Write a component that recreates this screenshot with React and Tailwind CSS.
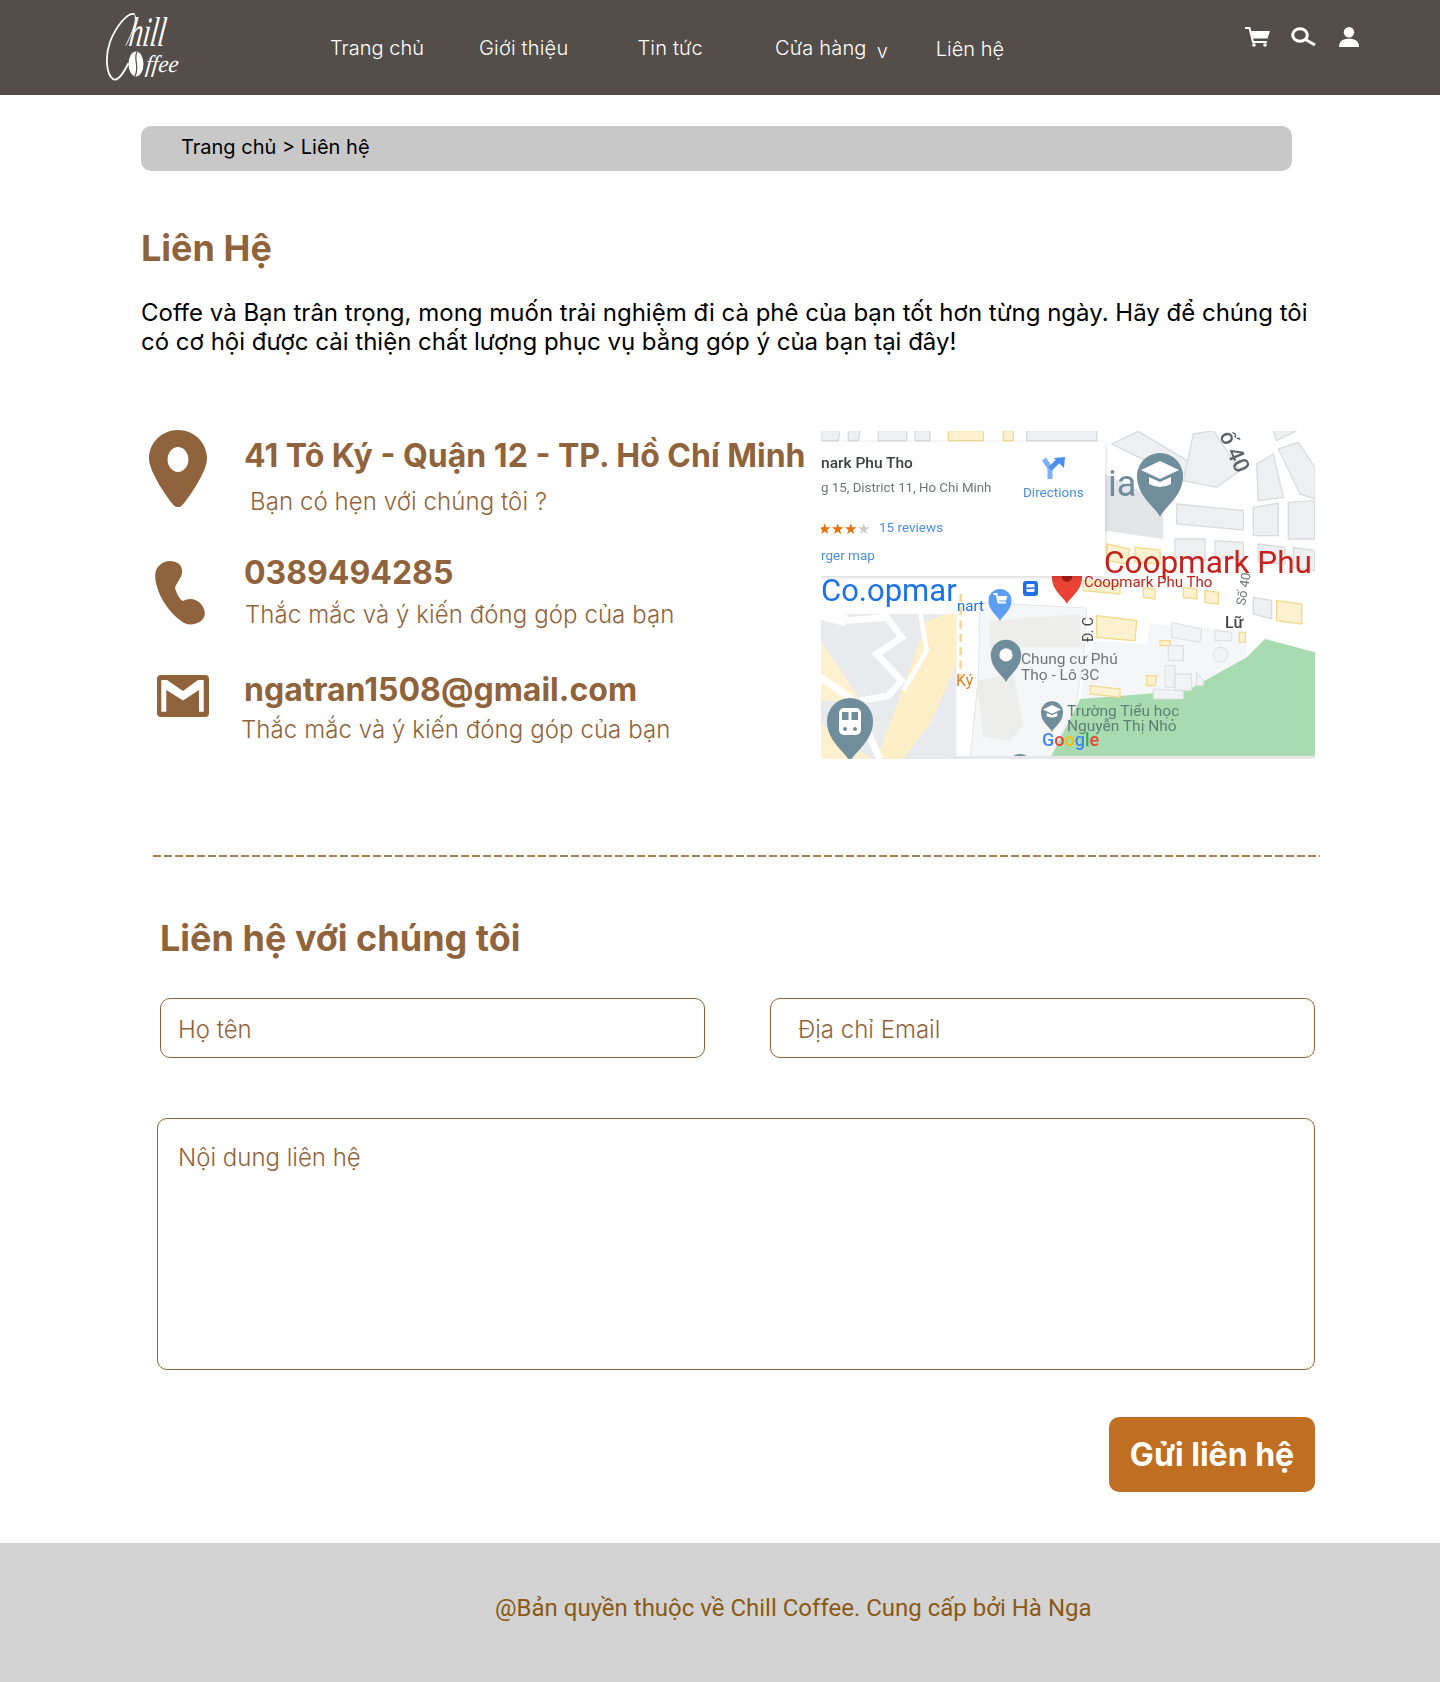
import React from "react";

const Logo = () => (
  <svg width="84" height="70" viewBox="0 0 84 70" className="ml-[104px] mt-[12px] shrink-0">
    {/* C swash */}
    <path d="M30 2 C24 0 12 14 6 30 C1 44 2 62 9 67 C14 70 20 60 24 52" fill="none" stroke="#fff" strokeWidth="1.800" strokeLinecap="round" />
    <path d="M30 2 C34 4 30 18 22 33" fill="none" stroke="#fff" strokeWidth="1" strokeLinecap="round" />
    <text transform="translate(24 34) skewX(-8)" fill="#fff" fontFamily="Liberation Serif" fontStyle="italic" fontSize="42" textLength="36" lengthAdjust="spacingAndGlyphs">hill</text>
    {/* bean */}
    <ellipse cx="32" cy="52" rx="7.500" ry="12.500" fill="#fff" />
    <path d="M33 40 C29 47 36 55 31 64" fill="none" stroke="#534e4a" strokeWidth="1.200" />
    <text transform="translate(41 60) skewX(-6)" fill="#fff" fontFamily="Liberation Serif" fontStyle="italic" fontSize="24" textLength="33" lengthAdjust="spacingAndGlyphs">ffee</text>
  </svg>
);

const CartIcon = () => (
  <svg width="25" height="20" viewBox="0 0 25 20">
    <path d="M0 1 H4.500 L8 15 H22" fill="none" stroke="#fff" strokeWidth="2" />
    <path d="M6 4 H25 L22.500 11.500 H8Z" fill="#fff" />
    <circle cx="9" cy="18" r="1.800" fill="#fff" />
    <circle cx="20" cy="18" r="1.800" fill="#fff" />
  </svg>
);

const SearchIcon = () => (
  <svg width="25" height="19" viewBox="0 0 25 19">
    <ellipse cx="9" cy="8" rx="7.300" ry="6.300" fill="none" stroke="#fff" strokeWidth="3" />
    <path d="M14.500 12.500 L24 18" fill="none" stroke="#fff" strokeWidth="3" />
  </svg>
);

const UserIcon = () => (
  <svg width="20" height="20" viewBox="0 0 20 20">
    <circle cx="10" cy="5.200" r="5.200" fill="#fff" />
    <path d="M0 20 C0 14 4 11.800 10 11.800 C16 11.800 20 14 20 20Z" fill="#fff" />
  </svg>
);

const PinIcon = () => (
  <svg width="58" height="77" viewBox="0 0 58 77">
    <path fillRule="evenodd" d="M29 0C13 0 0 12.500 0 28.500 C0 42 19 69 25 75.500 C27 77.500 31 77.500 33 75.500 C39 69 58 42 58 28.500 C58 12.500 45 0 29 0Z M29 17 a10 12 0 1 1 0 25 a10 12 0 1 1 0 -25Z" fill="#8f643c" />
  </svg>
);

const PhoneIcon = () => (
  <svg width="52" height="66" viewBox="0 0 52 66">
    <path d="M15 0 C23 0 28 5 27 12 C26 18 21 22 20 27 C22 33 24 38 28 40 C33 37 41 37 46 43 C51 49 51 56 46 60 C40 64 32 65 26 60 C15 52 5 38 1.500 24 C-1 14 0 8 5 4 C8 1 11 0 15 0Z" fill="#8f643c" />
  </svg>
);

const MailIcon = () => (
  <svg width="52" height="42" viewBox="0 0 52 42">
    <rect x="0" y="0" width="52" height="42" rx="4" fill="#8f643c" />
    <polygon points="4.300,5 10,5 26,16 41,5 46.700,5 46.700,36.700 42,36.700 42,15 26,25.500 9.300,15 9.300,36.700 4.300,36.700" fill="#fff" />
  </svg>
);

const Marker = ({ x, y, s = 1, color = "#6f8d9b", children }) => (
  <g transform={`translate(${x} ${y}) scale(${s})`}>
    <path d="M0 0 C-4 -10 -23 -20 -23 -41 A23 23 0 1 1 23 -41 C23 -20 4 -10 0 0Z" fill={color} />
    {children}
  </g>
);

const Cap = () => (
  <>
    <path d="M0 -56 L19 -47 L0 -38 L-19 -47Z" fill="#fff" />
    <path d="M-11 -40 L-11 -33 Q0 -27 11 -33 L11 -40 L0 -35Z" fill="#fff" />
  </>
);

// polygons in crop coordinates (3x), see the group transform below
const grayBlocks = [
  "33,20 90,20 85,50 33,50",
  "115,20 150,20 145,50 115,50",
  "205,20 290,20 290,50 205,50",
  "315,20 360,20 360,50 315,50",
  "650,20 860,20 860,50 650,50",
  "905,60 985,22 1165,130 1100,155",
  "1100,240 1300,260 1300,318 1100,300",
  "1330,250 1405,238 1405,335 1330,335",
  "1435,235 1515,230 1515,345 1435,345",
  "1405,75 1465,55 1515,130 1515,225 1470,210",
  "1340,120 1390,90 1420,220 1345,230",
  "1150,30 1210,20 1290,140 1220,190 1120,170",
  "1390,20 1460,20 1400,50",
  "1095,345 1185,345 1185,410 1095,400",
  "1215,350 1300,355 1300,410 1215,400",
  "1345,360 1425,370 1425,420 1345,415",
  "1450,370 1515,380 1515,440 1450,430",
  "1330,520 1385,530 1385,585 1330,570",
];

const yellowBlocks = [
  "415,20 520,20 520,50 415,50",
  "580,20 610,20 610,50 580,50",
  "890,360 960,375 950,420 890,410",
  "975,370 1050,378 1050,420 975,415",
  "860,575 980,590 975,650 860,640",
  "1400,530 1475,540 1475,600 1400,590",
  "820,470 930,480 930,510 820,500",
  "1000,490 1035,495 1035,525 1000,520",
  "1120,490 1160,495 1160,525 1120,520",
  "1185,500 1225,505 1225,540 1185,535",
  "1010,755 1040,755 1035,785 1010,785",
  "840,785 930,795 930,820 840,810",
  "1050,650 1080,650 1080,665 1050,665",
  "1288,625 1306,625 1306,655 1288,655",
];

const outlineBlocks = [
  "1085,595 1175,615 1170,655 1085,640",
  "1215,620 1265,625 1265,650 1215,650",
  "1075,665 1120,665 1120,710 1075,710",
  "1065,725 1095,725 1095,790 1065,790",
  "1095,750 1145,750 1145,800 1095,800",
  "1160,745 1180,770 1180,785 1160,785",
  "1030,795 1120,800 1120,825 1030,825",
];

// Blurry map capture in the contact block
const MapPicture = () => (
  <svg width="494" height="328" viewBox="0 0 494 328" className="shrink-0 ml-[16px] block">
    <defs>
      <filter id="soft"><feGaussianBlur stdDeviation="0.5" /></filter>
      <filter id="cardShadow" x="-5%" y="-5%" width="110%" height="115%"><feDropShadow dx="0" dy="1" stdDeviation="2" floodColor="#000" floodOpacity="0.18" /></filter>
    </defs>
    <rect width="494" height="328" fill="#ffffff" />
    <g filter="url(#soft)">
      <g transform="translate(-11 -7) scale(0.33333)">
        <polygon points="885,150 1060,235 1060,345 885,320" fill="#e3e5e8" />
        {grayBlocks.map((p) => <polygon key={p} points={p} fill="#eff0f2" stroke="#d9dcdf" strokeWidth="4" />)}

        {/* lower left */}
        <polygon points="33,560 440,560 440,1005 33,1005" fill="#e8eaed" />
        <polygon points="33,650 120,780 150,830 33,830" fill="#fdf1cf" />
        <polygon points="33,900 110,960 190,1005 33,1005" fill="#fdf1cf" />
        <polygon points="350,590 440,560 440,720 360,900 280,1005 200,1005 280,790" fill="#fdf0c9" />
        <path d="M33 760 L130 830 L210 1005" fill="none" stroke="#fff" strokeWidth="22" />
        <path d="M110 590 L230 580 L275 640 L200 690 L275 770 L235 815 L150 830" fill="none" stroke="#fff" strokeWidth="20" />
        <path d="M33 570 L110 590" fill="none" stroke="#fff" strokeWidth="34" />
        <path d="M330 560 L350 680 L280 800" fill="none" stroke="#fff" strokeWidth="14" />

        {/* road over lower blocks */}
        <polygon points="33,455 885,455 885,530 440,570 33,570" fill="#ffffff" />
      </g>
      {/* Co.opmar sits behind the white column */}
      <text x="0" y="170" fontFamily="Roboto" fontSize="31" fill="#1a73e8">Co.opmar</text>
      <g transform="translate(-11 -7) scale(0.33333)">
        <rect x="440" y="455" width="65" height="550" fill="#fff" />
        <path d="M452 510 V780" stroke="#f7d98c" strokeWidth="8" strokeDasharray="24 16" />

        {/* hospital compound */}
        <polygon points="510,535 830,552 822,690 800,830 720,1005 480,1005 505,760" fill="#f5f6f8" stroke="#e3e5e8" strokeWidth="3" />
        <polygon points="540,590 810,570 815,670 640,670 540,700" fill="#ededec" />
        <polygon points="500,770 610,750 640,900 600,950 520,940" fill="#ededec" />
        <polygon points="1020,600 1310,620 1310,700 1130,800 810,830 830,700 850,650 1010,660" fill="#f5f6f8" />

        {/* park */}
        <polygon points="1365,645 1515,685 1515,1005 720,1005 810,825 1130,800 1310,700" fill="#a8dbb0" />

        {yellowBlocks.map((p) => <polygon key={p} points={p} fill="#fdf2d0" stroke="#f5d98f" strokeWidth="4" />)}
        {outlineBlocks.map((p) => <polygon key={p} points={p} fill="#f2f3f4" stroke="#dadcdf" strokeWidth="3" />)}
        <circle cx="1232" cy="692" r="22" fill="#f2f3f4" stroke="#dadcdf" strokeWidth="3" />
      </g>

      {/* markers */}
      <Marker x="339" y="86">
        <Cap />
      </Marker>
      <Marker x="29" y="331">
        <rect x="-11" y="-54" width="22" height="27" rx="5" fill="#fff" />
        <rect x="-8" y="-50" width="6.500" height="8" fill="#6f8d9b" />
        <rect x="1.500" y="-50" width="6.500" height="8" fill="#6f8d9b" />
        <circle cx="-5" cy="-33" r="2" fill="#6f8d9b" />
        <circle cx="5" cy="-33" r="2" fill="#6f8d9b" />
      </Marker>
      <Marker x="179" y="190" s="0.5" color="#5b9df5">
        <path d="M-13 -54 L-7 -54 L-3 -37 L12 -37" fill="none" stroke="#fff" strokeWidth="4" />
        <path d="M-6 -50 H15 L12 -41 H-4Z" fill="#fff" />
      </Marker>
      <Marker x="185" y="251" s="0.66">
        <circle cx="0" cy="-41" r="10" fill="#fff" />
      </Marker>
      <Marker x="231" y="301" s="0.48">
        <Cap />
      </Marker>
      <Marker x="199" y="355" s="0.5" />
      <Marker x="246" y="173" s="0.66" color="#ea4335" />
      <circle cx="246" cy="146" r="5" fill="#a61b12" />
      <rect x="202" y="150" width="15" height="15" rx="3" fill="#1a73e8" />
      <rect x="205.500" y="153" width="8" height="8" rx="1" fill="#fff" />
      <rect x="205.500" y="156.500" width="8" height="1.500" fill="#1a73e8" />

      {/* labels */}
      <g fontFamily="Roboto">
        <text x="284" y="65" fontSize="36" fill="#6f8d9b" dx="3">ia</text>
        <text x="283" y="142" fontSize="31.500" fill="#c5221f">Coopmark Phu</text>
        <text x="263" y="156" fontSize="15" fill="#c5221f">Coopmark Phu Tho</text>
        <text x="136" y="180" fontSize="15" fill="#1a73e8">nart</text>
        <text x="200" y="233" fontSize="15.500" fill="#70757a">Chung cư Phú</text>
        <text x="200" y="249" fontSize="15.500" fill="#70757a">Thọ - Lô 3C</text>
        <text x="246" y="285" fontSize="15.500" fill="#5f7f76">Trường Tiểu học</text>
        <text x="246" y="300" fontSize="15.500" fill="#5f7f76">Nguyễn Thị Nhỏ</text>
        <text x="135" y="255" fontSize="16" fill="#d9822b">Ký</text>
        <text x="404" y="197" fontSize="16" fill="#444" fontWeight="500">Lữ</text>
        <text fontSize="22" fill="#5f6368" fontWeight="500" transform="translate(398 4) rotate(66)">ố 40</text>
        <text fontSize="13" fill="#70757a" transform="translate(424 175) rotate(-80)">Số 40</text>
        <text fontSize="14" fill="#444" transform="translate(272 211) rotate(-90)">Đ. C</text>
        <text x="221" y="315" fontSize="18" fontWeight="500"><tspan fill="#4285f4">G</tspan><tspan fill="#ea4335">o</tspan><tspan fill="#fbbc05">o</tspan><tspan fill="#4285f4">g</tspan><tspan fill="#34a853">l</tspan><tspan fill="#ea4335">e</tspan></text>
      </g>
      <rect x="130" y="325" width="364" height="3" fill="#e5e7e8" />
    </g>

    {/* info card */}
    <g>
      <rect x="-10" y="11" width="294" height="134" fill="#fff" filter="url(#cardShadow)" />
      <g fontFamily="Roboto" filter="url(#soft)">
        <text x="0" y="37" fontSize="15.500" fontWeight="500" fill="#3c4043">nark Phu Tho</text>
        <text x="0" y="61" fontSize="13.300" fill="#70757a">g 15, District 11, Ho Chi Minh</text>
        <text x="58" y="101" fontSize="13.500" fill="#4a90e2">15 reviews</text>
        <text x="0" y="129" fontSize="13.500" fill="#4a90e2">rger map</text>
        <text x="-3" y="103" fontSize="14.500" fill="#e8710a">★★★<tspan fill="#ccc">★</tspan></text>
        <text x="202" y="66" fontSize="13.500" fill="#4a90e2">Directions</text>
        <path d="M229 48 V37 L223 28" fill="none" stroke="#7eb2f7" strokeWidth="5" />
        <path d="M229 38 L238 29" fill="none" stroke="#4a8ff0" strokeWidth="5" />
        <path d="M233 27 L244 26 L243 37Z" fill="#4a8ff0" />
      </g>
    </g>
  </svg>
);

const ContactRow = ({ icon, title, sub, h, subClass, titleClass = "" }) => (
  <div className={`flex ${h}`}>{icon}<div className="flex flex-col">
    <p className={`text-[32px] leading-[39px] font-bold text-[#8f643c] whitespace-nowrap ${titleClass}`}>{title}</p>
    <p className={`text-[24px] leading-[29px] font-light tracking-[0.08px] text-[#8f643c] whitespace-nowrap ${subClass}`}>{sub}</p>
  </div></div>
);

export default function App() {
  return (
    <div className="font-['Inter',sans-serif] bg-white text-black min-h-[1682px] flex flex-col">
      {/* Header */}
      <header className="h-[95px] bg-[#534e4a] flex text-white text-[20px] leading-[24px] font-light">
        <Logo />
        <nav className="flex ml-[142px] mt-[36px]">
          <a>Trang chủ</a>
          <a className="ml-[55px] tracking-[0.2px]">Giới thiệu</a>
          <a className="ml-[69px] tracking-[0.2px]">Tin tức</a>
          <a className="ml-[72px] tracking-[0.2px]">Cửa hàng</a>
          <span className="ml-[10px] mt-[3px]">v</span>
          <a className="ml-[48px] mt-[1px]">Liên hệ</a>
        </nav>
        <div className="ml-auto mr-[81px] mt-[27px] flex items-start gap-[21px]">
          <CartIcon />
          <SearchIcon />
          <div className="ml-[2px]"><UserIcon /></div>
        </div>
      </header>

      <main className="flex-1 flex flex-col">
        {/* Breadcrumb */}
        <div className="ml-[141px] mt-[31px] w-[1151px] h-[45px] bg-[#c8c8c8] rounded-[10px] pl-[40px] text-[20px] leading-[43px]">
          Trang chủ &gt; Liên hệ
        </div>

        <h1 className="ml-[141px] mt-[55px] text-[36px] leading-[44px] font-bold text-[#8f643c]">Liên Hệ</h1>
        <p className="ml-[141px] mt-[28px] w-[1180px] text-[24px] leading-[29px]">
          Coffe và Bạn trân trọng, mong muốn trải nghiệm đi cà phê của bạn tốt hơn từng ngày. Hãy để chúng tôi có cơ hội được cải thiện chất lượng phục vụ bằng góp ý của bạn tại đây!
        </p>

        {/* Contact info + map */}
        <section className="ml-[141px] mt-[75px] flex">
          <div className="w-[664px] flex flex-col">
            <ContactRow h="h-[118px]" icon={<div className="w-[103px] pl-[8px] shrink-0 -mt-[1px]"><PinIcon /></div>} title={<span className="block pt-[5px]">41 Tô Ký - Quận 12 - TP. Hồ Chí Minh</span>} sub="Bạn có hẹn với chúng tôi ?" subClass="ml-[6px] mt-[12px]" />
            <ContactRow h="h-[117px]" icon={<div className="w-[103px] pl-[14px] shrink-0 mt-[12px]"><PhoneIcon /></div>} title={<span className="block pt-[4px]">0389494285</span>} sub="Thắc mắc và ý kiến đóng góp của bạn" subClass="ml-[1px] mt-[8px]" />
            <ContactRow h="h-[93px]" icon={<div className="w-[103px] pl-[16px] shrink-0 mt-[9px]"><MailIcon /></div>} title={<span className="block pt-[4px]">ngatran1508@gmail.com</span>} sub="Thắc mắc và ý kiến đóng góp của bạn" subClass="-ml-[3px] mt-[6px]" />
          </div>
          <MapPicture />
        </section>

        <div className="ml-[153px] mt-[96px] w-[1167px] h-[2px] bg-[repeating-linear-gradient(90deg,#a98055_0_8px,transparent_8px_11px)]" />

        {/* Form */}
        <form className="mt-[59px] flex flex-col">
          <h2 className="ml-[160px] text-[36px] leading-[44px] font-bold text-[#8f643c]">Liên hệ với chúng tôi</h2>
          <div className="ml-[160px] mt-[38px] flex gap-[65px]">
            <input placeholder="Họ tên" className="w-[545px] h-[60px] rounded-[10px] border border-[#8f643c] pl-[17px] pt-[2px] text-[24px] font-light placeholder:text-[#8f643c] placeholder:opacity-100" />
            <input placeholder="Địa chỉ Email" className="w-[545px] h-[60px] rounded-[10px] border border-[#8f643c] pl-[27px] pt-[2px] text-[24px] font-light placeholder:text-[#8f643c] placeholder:opacity-100" />
          </div>
          <textarea placeholder="Nội dung liên hệ" className="ml-[157px] mt-[60px] w-[1158px] h-[252px] rounded-[10px] border border-[#8f643c] pl-[20px] pt-[24px] text-[24px] leading-[29px] font-light resize-none block placeholder:text-[#8f643c] placeholder:opacity-100" />
          <button type="button" className="ml-[1109px] mt-[47px] w-[206px] h-[75px] rounded-[10px] bg-[#c06f22] text-white text-[32px] font-bold">Gửi liên hệ</button>
        </form>
      </main>

      {/* Footer */}
      <footer className="mt-[50px] h-[139px] bg-[#d3d3d3] pl-[495px] pt-[51px] font-['Roboto',sans-serif] text-[24px] leading-[28px] text-[#8a5a14]">
        @Bản quyền thuộc về Chill Coffee. Cung cấp bởi Hà Nga
      </footer>
    </div>
  );
}
